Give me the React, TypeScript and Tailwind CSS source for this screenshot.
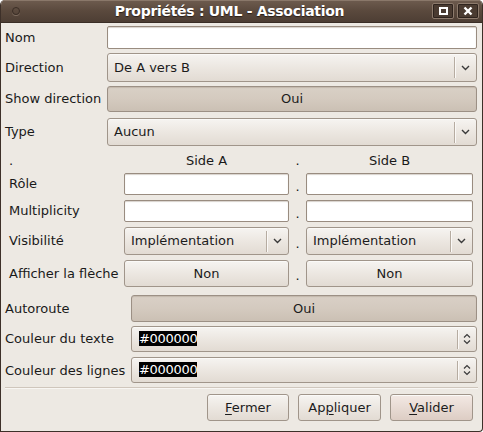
import React from 'react'

const font = "font-['DejaVu_Sans',_'Liberation_Sans',_sans-serif]"

const btnBase =
  'rounded-[3px] border border-[#a0958a] text-[13px] text-[#1c1c1c] flex items-center justify-center shadow-[inset_0_1px_0_#fbfaf8]'
const btnNormal = `${btnBase} bg-[linear-gradient(#f6f4f1,#ece7e1_50%,#e2dbd3)]`
const btnPressed =
  'rounded-[3px] border border-[#9c9085] text-[13px] text-[#1c1c1c] flex items-center justify-center bg-[linear-gradient(#d9d0c6,#d4cabf_50%,#cbc0b4)] shadow-[inset_0_1px_1px_#c2b7ab]'

function Entry({ className = '' }: { className?: string }) {
  return (
    <div
      className={`bg-white border border-[#998c80] rounded-[2px] shadow-[inset_0_1px_1px_#d8d2cc] ${className}`}
    />
  )
}

function Chevron() {
  return (
    <svg width="9" height="6" viewBox="0 0 9 6" className="text-[#3a3a3a]">
      <path d="M1 1l3.5 3.5L8 1" fill="none" stroke="currentColor" strokeWidth="1.4" />
    </svg>
  )
}

function Combo({ value, className = '' }: { value: string; className?: string }) {
  return (
    <div className={`${btnNormal} !justify-start ${className}`}>
      <span className="flex-1 pl-[6px] text-left">{value}</span>
      <span className="w-px h-[21px] bg-[#b6aca1] shadow-[1px_0_0_#fbf9f7]" />
      <span className="w-[21px] flex items-center justify-center">
        <Chevron />
      </span>
    </div>
  )
}

function ColorSpin() {
  return (
    <div className={`${btnNormal} !justify-start h-[26px]`}>
      <span className="flex-1 pl-[7px] text-left">
        <span className="bg-black text-white leading-[15px] inline-block tracking-[-0.3px]">#000000</span>
      </span>
      <span className="w-px h-[19px] bg-[#b6aca1] shadow-[1px_0_0_#fbf9f7]" />
      <span className="w-[18px] flex items-center justify-center">
        <svg width="8" height="12" viewBox="0 0 8 12" className="text-[#3a3a3a]">
          <path d="M1 4.5L4 1.5l3 3M1 7.5l3 3 3-3" fill="none" stroke="currentColor" strokeWidth="1.2" />
        </svg>
      </span>
    </div>
  )
}

function Row({ label, children, mt, h }: { label: string; children: React.ReactNode; mt: string; h: string }) {
  return (
    <div className={`flex ${mt} ${h}`}>
      <div className="w-[106px] pl-[4px] flex items-center">{label}</div>
      <div className="flex-1 pr-[5px] flex flex-col">{children}</div>
    </div>
  )
}

function SideRow({ label, mt, h, a, b }: { label: string; mt: string; h: string; a: React.ReactNode; b: React.ReactNode }) {
  return (
    <div className={`flex ${mt} ${h}`}>
      <div className="w-[123px] pl-[8px] flex items-center">{label}</div>
      <div className="w-[165px] flex flex-col">{a}</div>
      <div className="w-[17px] flex items-center justify-center pt-[5px]">.</div>
      <div className="w-[167px] flex flex-col">{b}</div>
    </div>
  )
}

function BottomRow({ label, children, mt, h }: { label: string; children: React.ReactNode; mt: string; h: string }) {
  return (
    <div className={`flex ${mt} ${h}`}>
      <div className="w-[130px] pl-[4px] flex items-center whitespace-nowrap">{label}</div>
      <div className="flex-1 pr-[5px] flex flex-col">{children}</div>
    </div>
  )
}

export default function App() {
  return (
    <div className={`w-[483px] h-[432px] ${font} text-[13px] text-[#1a1a1a]`}>
      <div className="w-full h-full flex flex-col rounded-t-[5px] rounded-br-[4px] overflow-hidden border border-t-0 border-[#3d3029] bg-[#ede9e3]">
        {/* title bar */}
        <div className="h-[23px] shrink-0 relative flex items-center justify-center pr-[24px] bg-[linear-gradient(#6e5c4f,#5a493d_50%,#4d3e34)] shadow-[inset_0_1px_0_#8a786a] border-b border-[#3a2e27]">
          <span className="absolute left-[11px] top-[7px] w-[8px] h-[8px] rounded-full border border-[#3a2d25] shadow-[0_1px_0_#7d6b5e]" />
          <span className="font-bold text-[14px] text-white tracking-[-0.3px] [text-shadow:0_1px_1px_#2a1e17]">
            Propriétés : UML - Association
          </span>
          <div className="absolute right-[3px] top-[3px] flex gap-[3px]">
            <div className="w-[22px] h-[16px] rounded-[2px] border border-[#8c7a6c] bg-[#4a3b31] shadow-[inset_0_0_0_1px_#2f241e] flex items-center justify-center">
              <span className="w-[9px] h-[8px] border-2 border-white" />
            </div>
            <div className="w-[22px] h-[16px] rounded-[2px] border border-[#8c7a6c] bg-[#4a3b31] shadow-[inset_0_0_0_1px_#2f241e] flex items-center justify-center">
              <svg width="10" height="10" viewBox="0 0 10 10">
                <path d="M1.5 1.5l7 7M8.5 1.5l-7 7" stroke="white" strokeWidth="2.4" />
              </svg>
            </div>
          </div>
        </div>

        <Row label="Nom" mt="mt-[3px]" h="h-[23px]">
          <Entry className="h-full" />
        </Row>
        <Row label="Direction" mt="mt-[4px]" h="h-[29px]">
          <Combo value="De A vers B" className="h-full" />
        </Row>
        <Row label="Show direction" mt="mt-[4px]" h="h-[26px]">
          <div className={`${btnPressed} h-full`}>Oui</div>
        </Row>
        <Row label="Type" mt="mt-[6px]" h="h-[28px]">
          <Combo value="Aucun" className="h-full" />
        </Row>

        {/* sides */}
        <div className="flex mt-[4px] h-[22px] items-center">
          <div className="w-[123px] pl-[8px]">.</div>
          <div className="w-[165px] text-center">Side A</div>
          <div className="w-[17px] text-center">.</div>
          <div className="w-[167px] text-center">Side B</div>
        </div>
        <SideRow
          label="Rôle"
          mt="mt-[1px]"
          h="h-[22px]"
          a={<Entry className="h-full" />}
          b={<Entry className="h-full" />}
        />
        <SideRow
          label="Multiplicity"
          mt="mt-[5px]"
          h="h-[22px]"
          a={<Entry className="h-full" />}
          b={<Entry className="h-full" />}
        />
        <SideRow
          label="Visibilité"
          mt="mt-[5px]"
          h="h-[28px]"
          a={<Combo value="Implémentation" className="h-full" />}
          b={<Combo value="Implémentation" className="h-full" />}
        />
        <SideRow
          label="Afficher la flèche"
          mt="mt-[5px]"
          h="h-[27px]"
          a={<div className={`${btnNormal} h-full`}>Non</div>}
          b={<div className={`${btnNormal} h-full`}>Non</div>}
        />

        <BottomRow label="Autoroute" mt="mt-[8px]" h="h-[27px]">
          <div className={`${btnPressed} h-full`}>Oui</div>
        </BottomRow>
        <BottomRow label="Couleur du texte" mt="mt-[4px]" h="h-[26px]">
          <ColorSpin />
        </BottomRow>
        <BottomRow label="Couleur des lignes" mt="mt-[5px]" h="h-[27px]">
          <ColorSpin />
        </BottomRow>

        <div className="mt-[3px] mx-[4px] h-[2px] border-t border-[#cfc6bc] border-b border-b-[#f8f6f3]" />

        <div className="flex justify-end gap-[9px] mt-[5px] pr-[9px]">
          <div className={`${btnNormal} w-[82px] h-[27px]`}>
            <span>
              <span className="underline underline-offset-2">F</span>ermer
            </span>
          </div>
          <div className={`${btnNormal} w-[83px] h-[27px]`}>
            <span>
              Ap<span className="underline underline-offset-2">p</span>liquer
            </span>
          </div>
          <div className={`${btnBase} w-[83px] h-[27px] bg-[linear-gradient(#f3e9e4,#e8dbd4_50%,#ddcdc4)] border-[#a08a80]`}>
            <span>
              <span className="underline underline-offset-2">V</span>alider
            </span>
          </div>
        </div>
      </div>
    </div>
  )
}
